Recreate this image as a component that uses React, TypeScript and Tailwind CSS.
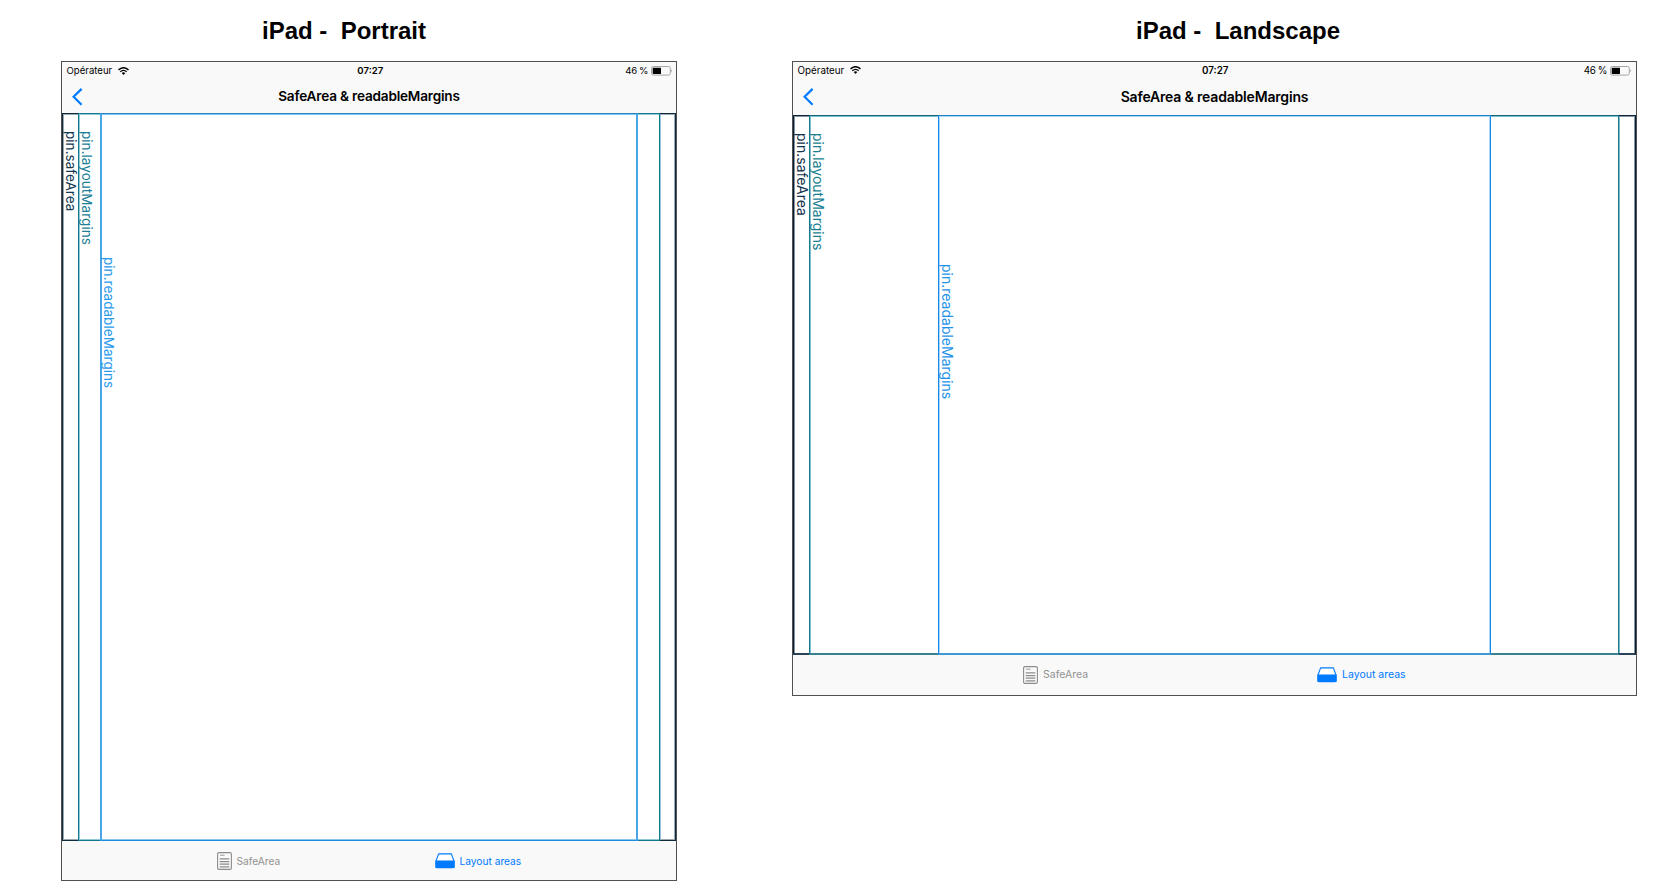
import type { ReactNode } from 'react';

interface Segment {
  className: string;
  label?: string;
  labelClass?: string;
}

interface Device {
  heading: string;
  headingClass: string;
  column: string;
  frame: string;
  statusBar: string;
  navBar: string;
  title: string;
  content: string;
  segments: Segment[];
  tabBar: string;
  firstTab: string;
}

const portrait: Device = {
  heading: 'iPad -  Portrait',
  headingClass: 'pl-[201px]',
  column: 'ml-[61px] w-[616px]',
  frame: 'h-[820px]',
  statusBar: 'pr-[3px] text-[9.6px]',
  navBar: 'h-[34px] pt-[2px]',
  title: 'text-[13.6px] tracking-[-0.2px]',
  content: 'text-[13.6px]',
  segments: [
    {
      className:
        'w-[16px] border-y border-l border-[#122b3c] shadow-[inset_1px_1px_0_#9aa8b2,inset_0_-1px_0_#9aa8b2]',
      label: 'pin.safeArea',
      labelClass: 'mt-[17px] text-[#143a52]',
    },
    {
      className:
        'w-[22px] border-y border-l border-[#14788c] shadow-[inset_1px_1px_0_#8fcad6,inset_0_-1px_0_#8fcad6]',
      label: 'pin.layoutMargins',
      labelClass: 'mt-[17px] text-[#1d8095]',
    },
    {
      className:
        'flex-1 border-x-2 border-y border-x-[#47a5e8] border-t-[#2f82bd] border-b-[#1b8ee0] shadow-[inset_0_1px_0_#7cc5f7,inset_0_-1px_0_#8cc6ee]',
      label: 'pin.readableMargins',
      labelClass: 'mt-[143px] -ml-px text-[#2b9bea]',
    },
    {
      className:
        'w-[22px] border-y border-r border-[#14788c] shadow-[inset_0_1px_0_#8fcad6,inset_0_-1px_0_#8fcad6]',
    },
    {
      className:
        'w-[16px] border-y border-r border-[#122b3c] shadow-[inset_-1px_1px_0_#9aa8b2,inset_0_-1px_0_#9aa8b2,inset_1px_0_0_#8fcad6]',
    },
  ],
  tabBar: 'h-[39px] pl-[154.5px] text-[10.2px]',
  firstTab: 'w-[218px]',
};

const landscape: Device = {
  heading: 'iPad -  Landscape',
  headingClass: 'pl-[344px]',
  column: 'ml-[115px] w-[845px]',
  frame: 'h-[635px]',
  statusBar: 'pr-[4px] text-[9.8px]',
  navBar: 'h-[36px]',
  title: 'text-[14px] tracking-[-0.18px]',
  content: 'text-[14px]',
  segments: [
    {
      className:
        'w-[16px] border-t border-b-2 border-l border-t-[#0d2236] border-b-[#2a4359] border-l-[#071c2e] shadow-[inset_1px_1px_0_#8496a3]',
      label: 'pin.safeArea',
      labelClass: 'mt-[17px] text-[#12324d]',
    },
    {
      className:
        'w-[129px] border-t border-b-2 border-l border-t-[#12687a] border-b-[#3b8291] border-l-[#177a8e] shadow-[inset_1px_1px_0_#7fbfcb]',
      label: 'pin.layoutMargins',
      labelClass: 'mt-[17px] text-[#1a7f92]',
    },
    {
      className:
        'flex-1 border-x border-t border-b-2 border-x-[#1489ea] border-t-[#1f82c4] border-b-[#3f98d6] shadow-[inset_0_1px_0_#a8d8f5,inset_1px_0_0_#a9d5f8,inset_-1px_0_0_#a9d5f8]',
      label: 'pin.readableMargins',
      labelClass: 'mt-[148px] text-[#1f93ea]',
    },
    {
      className:
        'w-[128px] border-t border-b-2 border-r border-t-[#12687a] border-b-[#3b8291] border-r-[#177a8e] shadow-[inset_0_1px_0_#7fbfcb]',
    },
    {
      className:
        'w-[17px] border-t border-b-2 border-r border-t-[#0d2236] border-b-[#2a4359] border-r-[#071c2e] shadow-[inset_-1px_1px_0_#8496a3,inset_1px_0_0_#7fb9c4]',
    },
  ],
  tabBar: 'h-[40px] pl-[230px] text-[10.5px]',
  firstTab: 'w-[294px]',
};

function Wifi() {
  return (
    <svg className="ml-[6px] h-[8px] w-[11px]" viewBox="0 0 11 8" fill="none" stroke="#000">
      <path d="M0.5 2.9Q5.5 -1.5 10.5 2.9" strokeWidth="1.4" />
      <path d="M2.3 4.8Q5.5 2 8.7 4.8" strokeWidth="1.3" />
      <path d="M3.7 6.1Q5.5 4.6 7.3 6.1L5.5 8Z" fill="#000" stroke="none" />
    </svg>
  );
}

function Battery() {
  return (
    <svg className="ml-[3px] h-[10px] w-[22px]" viewBox="0 0 22 10" fill="none">
      <rect x="0.5" y="0.5" width="18.8" height="8.6" rx="1.8" stroke="#a6a6a6" />
      <rect x="1.7" y="1.7" width="8.3" height="6.3" rx="0.4" fill="#000" />
      <path d="M20.4 3.3Q22 4.8 20.4 6.3Z" fill="#8a8a8a" />
    </svg>
  );
}

function DocumentIcon() {
  return (
    <svg className="h-[18px] w-[15px]" viewBox="0 0 15 18" fill="none" stroke="#8c8c8c">
      <rect x="0.6" y="0.6" width="13.8" height="16.8" rx="1.4" strokeWidth="1.1" />
      <path d="M3 3.2H7.5" strokeWidth="0.9" />
      <path d="M2.7 6.9H12.3M2.7 9.6H12.3M2.7 12.2H12.3M2.7 14.8H12.3" strokeWidth="1.2" />
    </svg>
  );
}

function TrayIcon() {
  return (
    <svg className="h-[16px] w-[20px]" viewBox="0 0 20 16">
      <path d="M3.6 0.9H16.4L19 8V14.4H1V8Z" fill="#fff" stroke="#007aff" strokeWidth="1.1" strokeLinejoin="round" />
      <path d="M0.4 7.6H19.6V13.6Q19.6 15.2 18 15.2H2Q0.4 15.2 0.4 13.6Z" fill="#007aff" />
    </svg>
  );
}

function Tab({ icon, children, className }: { icon: ReactNode; children: ReactNode; className: string }) {
  return (
    <div className={`flex items-center gap-[5px] ${className}`}>
      {icon}
      <span className="pt-px">{children}</span>
    </div>
  );
}

function IPad({ device }: { device: Device }) {
  return (
    <section className={`flex shrink-0 flex-col ${device.column}`}>
      <h2
        className={`flex h-[61px] items-center whitespace-pre pt-px text-[24px] leading-none font-bold [font-family:'Liberation_Sans',sans-serif] ${device.headingClass}`}
      >
        {device.heading}
      </h2>
      <div className={`flex flex-col border border-[#505050] bg-[#f9f9f9] ${device.frame}`}>
        <div className={`grid h-[17px] grid-cols-3 items-center pl-[4.5px] leading-none ${device.statusBar}`}>
          <div className="flex items-center">
            Opérateur
            <Wifi />
          </div>
          <div className="pl-[1px] text-center font-semibold">07:27</div>
          <div className="flex items-center justify-end">
            <span className="tracking-[-0.4px]">46 %</span>
            <Battery />
          </div>
        </div>
        <div className={`grid grid-cols-[40px_1fr_40px] items-center ${device.navBar}`}>
          <svg
            className="-mt-px ml-[10px] h-[18px] w-[11px]"
            viewBox="0 0 11 18"
            fill="none"
            stroke="#007aff"
            strokeWidth="2.2"
          >
            <path d="M9.6 0.9L1.6 8.8L9.6 16.7" />
          </svg>
          <h3 className={`text-center leading-none font-semibold ${device.title}`}>
            SafeArea &amp; readableMargins
          </h3>
        </div>
        <div className={`flex min-h-0 flex-1 bg-white ${device.content}`}>
          {device.segments.map((segment, index) => (
            <div key={index} className={`shrink-0 ${segment.className}`}>
              {segment.label && (
                <div
                  className={`w-[16px] leading-[16px] whitespace-nowrap [writing-mode:vertical-rl] ${segment.labelClass}`}
                >
                  {segment.label}
                </div>
              )}
            </div>
          ))}
        </div>
        <div className={`flex items-center leading-none ${device.tabBar}`}>
          <Tab icon={<DocumentIcon />} className={`text-[#929292] ${device.firstTab}`}>
            SafeArea
          </Tab>
          <Tab icon={<TrayIcon />} className="text-[#007aff]">
            Layout areas
          </Tab>
        </div>
      </div>
    </section>
  );
}

export default function App() {
  return (
    <main className="flex h-[886px] w-[1663px] items-start overflow-hidden bg-white text-black [font-family:Inter,sans-serif]">
      <IPad device={portrait} />
      <IPad device={landscape} />
    </main>
  );
}
